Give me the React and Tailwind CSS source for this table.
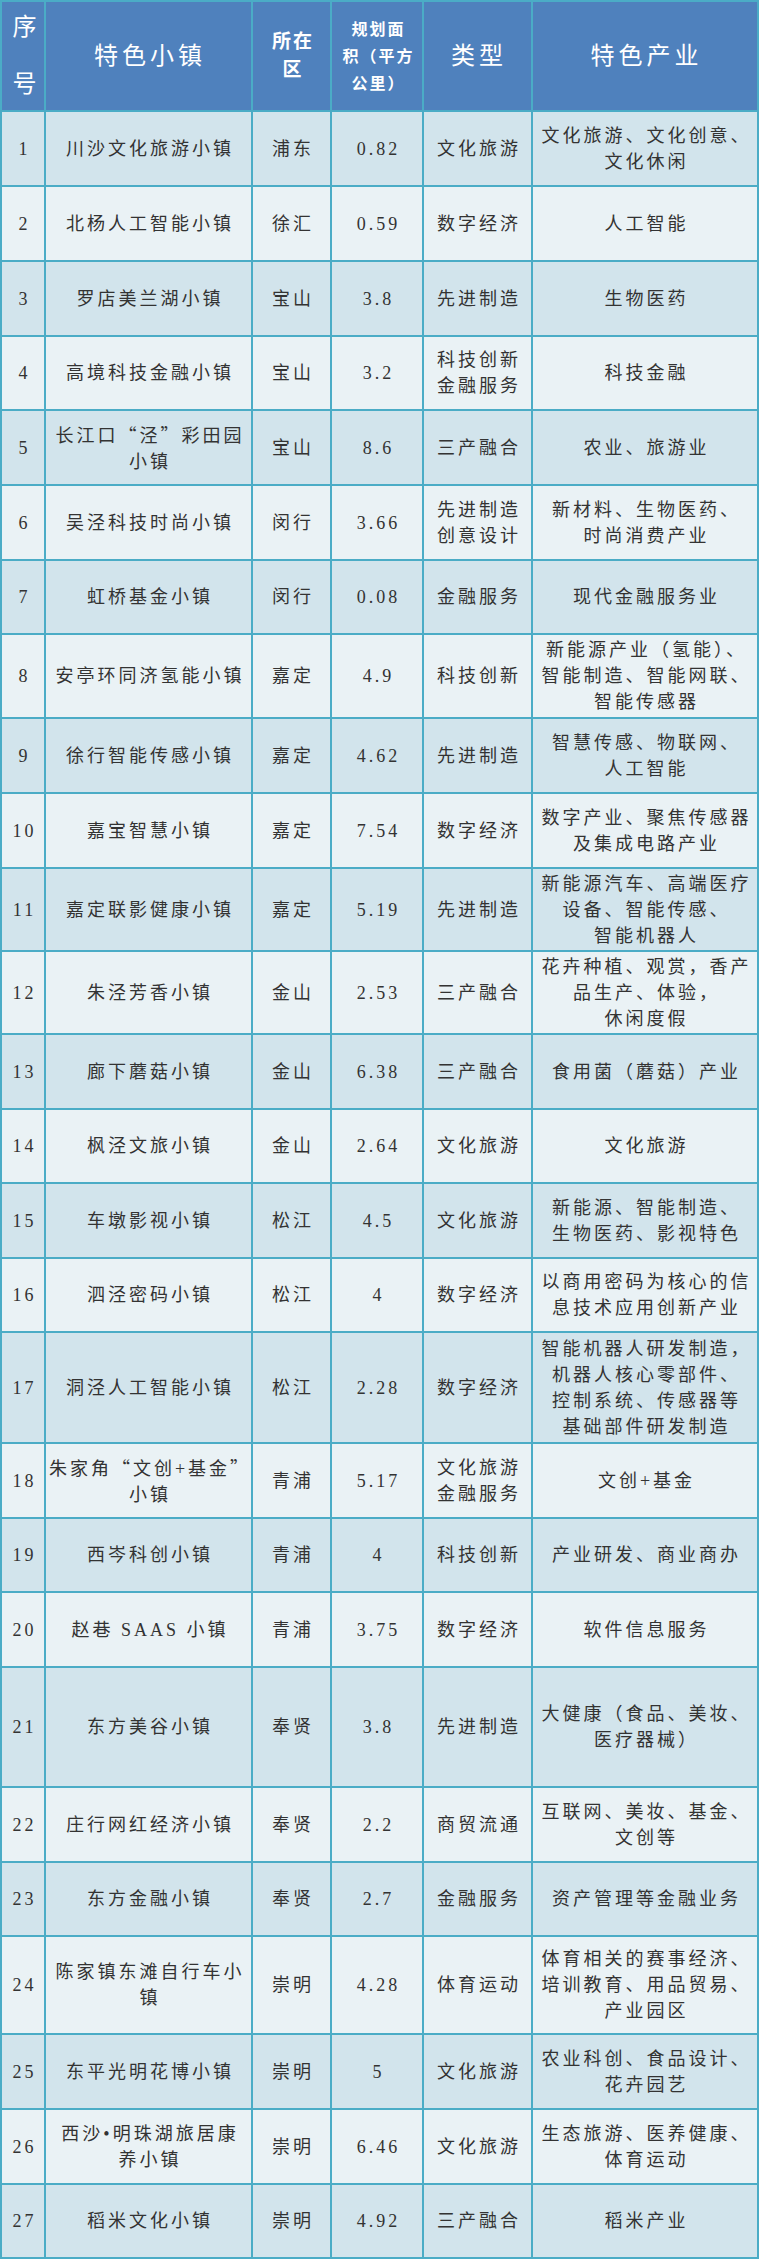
import React from 'react'

const rows = [
  ['1', ['川沙文化旅游小镇'], '浦东', '0.82', ['文化旅游'], ['文化旅游、文化创意、', '文化休闲']],
  ['2', ['北杨人工智能小镇'], '徐汇', '0.59', ['数字经济'], ['人工智能']],
  ['3', ['罗店美兰湖小镇'], '宝山', '3.8', ['先进制造'], ['生物医药']],
  ['4', ['高境科技金融小镇'], '宝山', '3.2', ['科技创新', '金融服务'], ['科技金融']],
  ['5', ['长江口“泾”彩田园', '小镇'], '宝山', '8.6', ['三产融合'], ['农业、旅游业']],
  ['6', ['吴泾科技时尚小镇'], '闵行', '3.66', ['先进制造', '创意设计'], ['新材料、生物医药、', '时尚消费产业']],
  ['7', ['虹桥基金小镇'], '闵行', '0.08', ['金融服务'], ['现代金融服务业']],
  ['8', ['安亭环同济氢能小镇'], '嘉定', '4.9', ['科技创新'], ['新能源产业（氢能）、', '智能制造、智能网联、', '智能传感器']],
  ['9', ['徐行智能传感小镇'], '嘉定', '4.62', ['先进制造'], ['智慧传感、物联网、', '人工智能']],
  ['10', ['嘉宝智慧小镇'], '嘉定', '7.54', ['数字经济'], ['数字产业、聚焦传感器', '及集成电路产业']],
  ['11', ['嘉定联影健康小镇'], '嘉定', '5.19', ['先进制造'], ['新能源汽车、高端医疗', '设备、智能传感、', '智能机器人']],
  ['12', ['朱泾芳香小镇'], '金山', '2.53', ['三产融合'], ['花卉种植、观赏，香产', '品生产、体验，', '休闲度假']],
  ['13', ['廊下蘑菇小镇'], '金山', '6.38', ['三产融合'], ['食用菌（蘑菇）产业']],
  ['14', ['枫泾文旅小镇'], '金山', '2.64', ['文化旅游'], ['文化旅游']],
  ['15', ['车墩影视小镇'], '松江', '4.5', ['文化旅游'], ['新能源、智能制造、', '生物医药、影视特色']],
  ['16', ['泗泾密码小镇'], '松江', '4', ['数字经济'], ['以商用密码为核心的信', '息技术应用创新产业']],
  ['17', ['洞泾人工智能小镇'], '松江', '2.28', ['数字经济'], ['智能机器人研发制造，', '机器人核心零部件、', '控制系统、传感器等', '基础部件研发制造']],
  ['18', ['朱家角“文创+基金”', '小镇'], '青浦', '5.17', ['文化旅游', '金融服务'], ['文创+基金']],
  ['19', ['西岑科创小镇'], '青浦', '4', ['科技创新'], ['产业研发、商业商办']],
  ['20', ['赵巷 SAAS 小镇'], '青浦', '3.75', ['数字经济'], ['软件信息服务']],
  ['21', ['东方美谷小镇'], '奉贤', '3.8', ['先进制造'], ['大健康（食品、美妆、', '医疗器械）']],
  ['22', ['庄行网红经济小镇'], '奉贤', '2.2', ['商贸流通'], ['互联网、美妆、基金、', '文创等']],
  ['23', ['东方金融小镇'], '奉贤', '2.7', ['金融服务'], ['资产管理等金融业务']],
  ['24', ['陈家镇东滩自行车小', '镇'], '崇明', '4.28', ['体育运动'], ['体育相关的赛事经济、', '培训教育、用品贸易、', '产业园区']],
  ['25', ['东平光明花博小镇'], '崇明', '5', ['文化旅游'], ['农业科创、食品设计、', '花卉园艺']],
  ['26', ['西沙•明珠湖旅居康', '养小镇'], '崇明', '6.46', ['文化旅游'], ['生态旅游、医养健康、', '体育运动']],
  ['27', ['稻米文化小镇'], '崇明', '4.92', ['三产融合'], ['稻米产业']],
]

// curly quotes look full width in the source, so push them to the CJK font
function Line({ text }) {
  const parts = text.split(/([“”])/)
  return (
    <span className="whitespace-nowrap">
      {parts.map((p, i) =>
        p === '“' || p === '”'
          ? <span key={i} className="font-['Noto_Sans_CJK_SC']">{p}</span>
          : <React.Fragment key={i}>{p}</React.Fragment>
      )}
    </span>
  )
}

function Lines({ lines }) {
  return (
    <div className="flex flex-col items-center">
      {lines.map((l, i) => <Line key={i} text={l} />)}
    </div>
  )
}

function Head({ children, className = '' }) {
  return (
    <div className={'bg-[#4f81bd] text-white flex items-center justify-center text-center pl-[3px] ' + className}>
      {children}
    </div>
  )
}

export default function App() {
  return (
    <div className="w-[760px] bg-white" style={{ fontFamily: '"Liberation Serif", "Noto Sans CJK SC", serif' }}>
      <div className="grid grid-cols-[42px_205px_77px_90px_107px_224px] grid-rows-[108px_73px_73px_73px_72px_73px_73px_72px_82px_73px_73px_81px_81px_73px_72px_73px_72px_109px_73px_72px_73px_118px_73px_72px_96px_73px_73px_72px] gap-[2px] p-[2px] bg-[#4bacc6] w-[759px]">
        <Head className="text-[24px] leading-[57px]">
          <div className="flex flex-col"><span>序</span><span>号</span></div>
        </Head>
        <Head className="text-[24px] tracking-[4px]">特色小镇</Head>
        <Head className="text-[19px] font-bold leading-[28px] tracking-[2px]">
          <div className="flex flex-col"><span>所在</span><span>区</span></div>
        </Head>
        <Head className="text-[16px] font-bold leading-[27px] tracking-[2px]">
          <div className="flex flex-col"><span>规划面</span><span>积（平方</span><span>公里）</span></div>
        </Head>
        <Head className="text-[24px] tracking-[4px]">类型</Head>
        <Head className="text-[24px] tracking-[4px]">特色产业</Head>

        {rows.map((r, i) => {
          const bg = i % 2 === 0 ? 'bg-[#d2e4ec]' : 'bg-[#eaf2f5]'
          const cell = bg + ' flex items-center justify-center text-center text-[#333333] text-[18px] leading-[26px] tracking-[3px] pl-[3px]'
          return (
            <React.Fragment key={r[0]}>
              <div className={cell + ' tracking-[1px] pl-[1px]'}>{r[0]}</div>
              <div className={cell}><Lines lines={r[1]} /></div>
              <div className={cell}>{r[2]}</div>
              <div className={cell}>{r[3]}</div>
              <div className={cell}><Lines lines={r[4]} /></div>
              <div className={cell}><Lines lines={r[5]} /></div>
            </React.Fragment>
          )
        })}
      </div>
    </div>
  )
}
